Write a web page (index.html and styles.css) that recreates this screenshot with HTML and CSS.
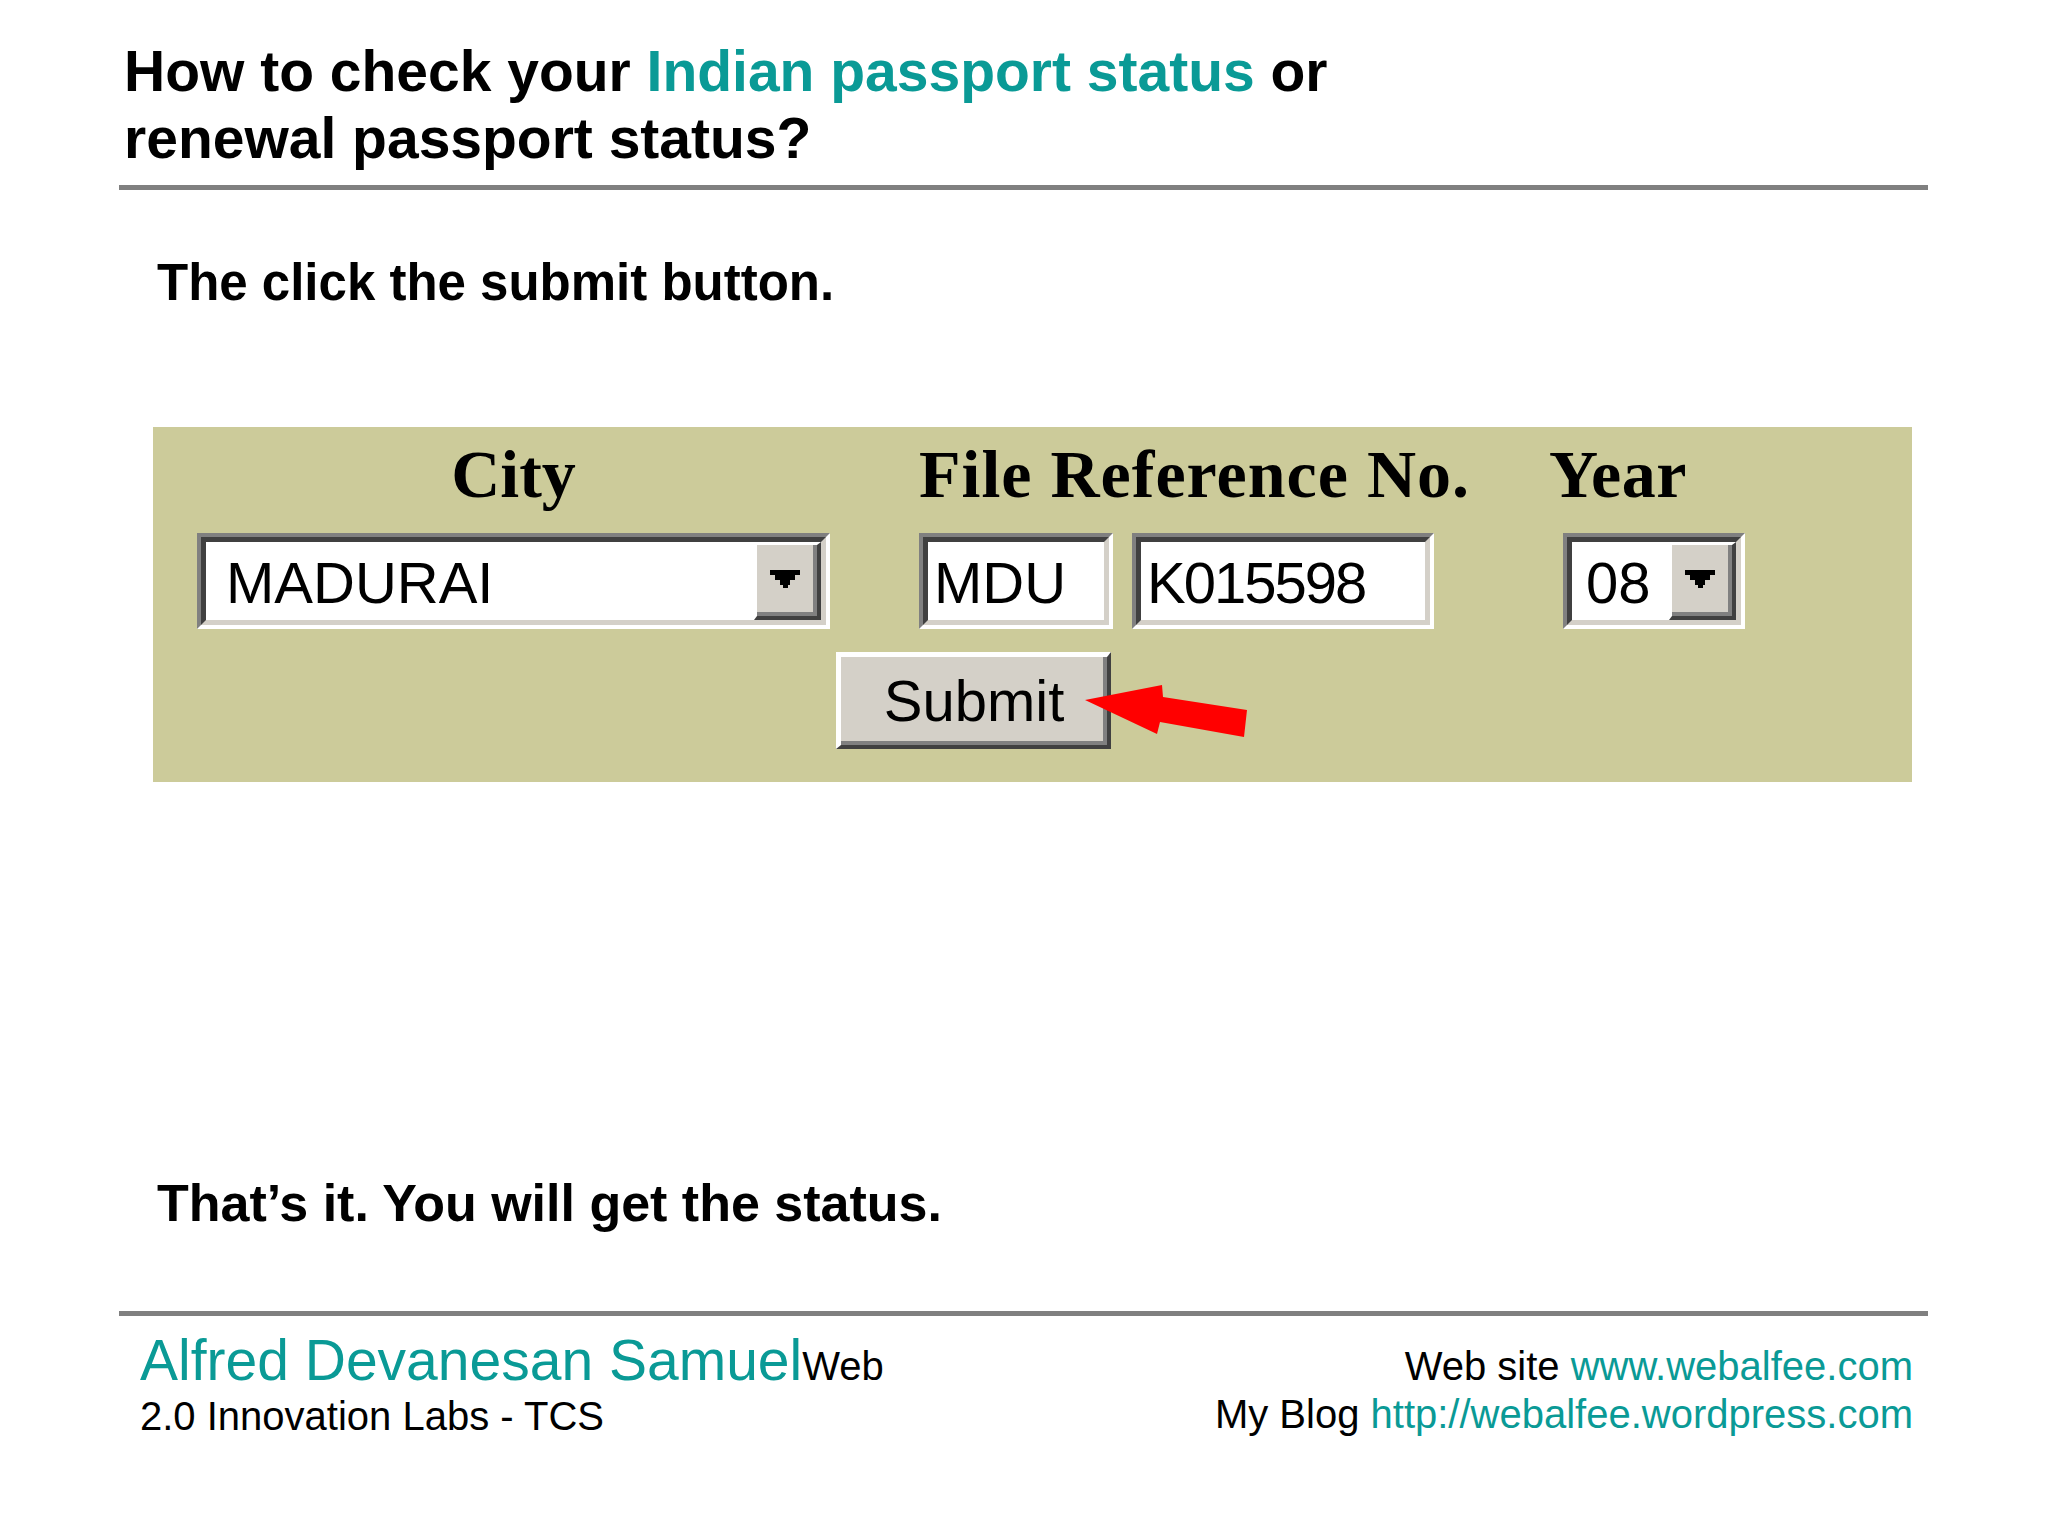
FILE: index.html
```html
<!DOCTYPE html>
<html lang="en">
<head>
<meta charset="utf-8">
<title>How to check your Indian passport status</title>
<link rel="stylesheet" href="styles.css">
</head>
<body>
<div class="page">
  <h1 class="title">How to check your <span class="teal">Indian passport status</span> or<br>renewal passport status?</h1>
  <div class="rule"></div>

  <p class="step">The click the submit button.</p>

  <div class="panel">
    <div class="labels">
      <div class="lbl lbl-city">City</div>
      <div class="lbl lbl-ref">File Reference No.</div>
      <div class="lbl lbl-year">Year</div>
    </div>
    <div class="fields">
      <div class="inset w-city">
        <div class="well">
          <span class="val val-city">MADURAI</span>
          <span class="drop"><svg class="tri" width="30" height="18" viewBox="0 0 30 18"><polygon points="0,0 30,0 30,5 25,5 25,10 20,10 20,15 17.5,15 17.5,18 12.5,18 12.5,15 10,15 10,10 5,10 5,5 0,5" fill="#000"/></svg></span>
        </div>
      </div>
      <div class="inset w-mdu">
        <div class="well"><span class="val val-text">MDU</span></div>
      </div>
      <div class="inset w-ref">
        <div class="well"><span class="val val-text val-num">K015598</span></div>
      </div>
      <div class="inset w-year">
        <div class="well">
          <span class="val val-year">08</span>
          <span class="drop"><svg class="tri" width="30" height="18" viewBox="0 0 30 18"><polygon points="0,0 30,0 30,5 25,5 25,10 20,10 20,15 17.5,15 17.5,18 12.5,18 12.5,15 10,15 10,10 5,10 5,5 0,5" fill="#000"/></svg></span>
        </div>
      </div>
    </div>
    <div class="actions">
      <button class="submit" type="button">Submit</button>
    </div>
    <svg class="pointer" width="175" height="65" viewBox="0 0 175 65">
      <polygon points="7,23 84,8 85,20 169,33 166,60 82,45 79,57" fill="#ff0000"/>
    </svg>
  </div>

  <p class="step done">That’s it. You will get the status.</p>

  <div class="rule rule-bottom"></div>

  <footer class="footer">
    <div class="author">
      <div class="author-name"><span class="teal">Alfred Devanesan Samuel</span><span class="org">Web</span></div>
      <div class="author-org">2.0 Innovation Labs - TCS</div>
    </div>
    <div class="links">
      <div>Web site <span class="teal">www.webalfee.com</span></div>
      <div>My Blog <span class="teal">http://webalfee.wordpress.com</span></div>
    </div>
  </footer>
</div>
</body>
</html>
```

FILE: styles.css
```css
html, body {
  margin: 0;
  padding: 0;
  background: #ffffff;
}

body {
  font-family: "Liberation Sans", Arial, sans-serif;
  color: #000;
}

.page {
  margin-left: 119px;
  width: 1809px;
  padding-top: 38px;
}

.teal {
  color: #0a9a96;
}

.title {
  margin: 0;
  padding-left: 5px;
  font-size: 57px;
  line-height: 67px;
  font-weight: bold;
}

.rule {
  height: 5px;
  background: #808080;
  margin-top: 13px;
}

.step {
  margin: 64px 0 0 0;
  padding-left: 38px;
  font-size: 51px;
  line-height: 58px;
  font-weight: bold;
}

.step.done {
  margin-top: 392px;
  font-size: 52px;
}

.rule-bottom {
  margin-top: 79px;
}

/* form panel */
.panel {
  position: relative;
  margin: 115px 0 0 34px;
  width: 1759px;
  box-sizing: border-box;
  padding: 7px 0 33px 44px;
  background: #cccb9a;
}

.labels {
  display: flex;
  height: 80px;
}

.lbl {
  font-family: "Liberation Serif", "Times New Roman", serif;
  font-weight: bold;
  font-size: 68px;
  line-height: 80px;
  color: #000;
  white-space: nowrap;
}

.lbl-city {
  width: 633px;
  text-align: center;
}

.lbl-ref {
  margin-left: 89px;
  width: 630px;
  letter-spacing: 1px;
}

.lbl-year {
  letter-spacing: 0.5px;
}

.fields {
  display: flex;
  margin-top: 19px;
}

.inset {
  box-sizing: border-box;
  height: 96px;
  border: 4px solid;
  border-color: #808080 #ffffff #ffffff #808080;
}

.well {
  box-sizing: border-box;
  height: 100%;
  border: 5px solid;
  border-color: #404040 #d4d0c8 #d4d0c8 #404040;
  background: #ffffff;
  display: flex;
  align-items: stretch;
}

.w-city { width: 633px; }
.w-mdu { width: 194px; margin-left: 89px; }
.w-ref { width: 302px; margin-left: 19px; }
.w-year { width: 182px; margin-left: 129px; }

.val {
  flex: 1;
  font-size: 58px;
  line-height: 78px;
  padding-top: 2px;
  color: #000;
  white-space: nowrap;
  overflow: hidden;
}

.val-city { padding-left: 20px; }
.val-text { padding-left: 6px; }
.val-num { letter-spacing: -2px; }
.val-year { padding-left: 14px; }

.drop {
  box-sizing: border-box;
  width: 67px;
  border-style: solid;
  border-width: 3px 4px 4px 3px;
  border-color: #ffffff #404040 #404040 #ffffff;
  box-shadow: inset -4px -4px 0 #808080;
  background: #d4d0c8;
  display: flex;
  align-items: center;
  justify-content: center;
  padding: 0 4px 4px 0;
}

.tri {
  display: block;
  shape-rendering: crispEdges;
}

.actions {
  margin-top: 23px;
  padding-left: 639px;
}

.submit {
  display: block;
  box-sizing: border-box;
  width: 275px;
  height: 97px;
  margin: 0;
  padding: 0;
  border-style: solid;
  border-width: 5px 4px 4px 5px;
  border-color: #ffffff #404040 #404040 #ffffff;
  box-shadow: inset -4px -4px 0 #808080;
  background: #d4d0c8;
  font-family: "Liberation Sans", Arial, sans-serif;
  font-size: 58px;
  line-height: 84px;
  color: #000;
}

.pointer {
  position: absolute;
  left: 925px;
  top: 250px;
}

/* footer */
.footer {
  display: flex;
  justify-content: space-between;
  align-items: flex-start;
  padding: 0 15px 0 21px;
}

.author {
  padding-top: 15px;
}

.author-name {
  font-size: 57px;
  line-height: 59px;
  white-space: nowrap;
}

.org {
  font-size: 40px;
  line-height: 1;
}

.author-org {
  margin-top: 1px;
  font-size: 40px;
  line-height: 50px;
}

.links {
  padding-top: 26px;
  text-align: right;
  font-size: 40px;
  line-height: 48px;
  white-space: nowrap;
}
```
